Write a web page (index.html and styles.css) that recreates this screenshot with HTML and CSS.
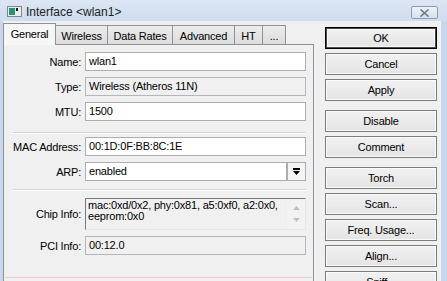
FILE: index.html
```html
<!DOCTYPE html>
<html>
<head>
<meta charset="utf-8">
<link rel="stylesheet" href="styles.css">
</head>
<body>
<div class="window">
  <div class="titlebar">
    <svg class="appicon" width="15" height="11" viewBox="0 0 15 11">
      <rect x="0.5" y="0.5" width="14" height="10" fill="#e8ecef" stroke="#7d8790"/>
      <rect x="2" y="2" width="6" height="7" fill="#2f8f6f"/>
      <rect x="9" y="2" width="2" height="3" fill="#1a1a1a"/>
    </svg>
    <span class="title">Interface &lt;wlan1&gt;</span>
    <div class="close">
      <svg width="11" height="8" viewBox="0 0 11 8">
        <path d="M1.5 0.5 L9.5 7.5 M9.5 0.5 L1.5 7.5" stroke="#6d7886" stroke-width="1.6" fill="none"/>
      </svg>
    </div>
  </div>
  <div class="client">
    <div class="left">
      <div class="tabs">
        <div class="tab selected t-general">General</div>
        <div class="tab t-wireless">Wireless</div>
        <div class="tab t-rates">Data Rates</div>
        <div class="tab t-adv">Advanced</div>
        <div class="tab t-ht">HT</div>
        <div class="tab t-more">...</div>
      </div>
      <div class="pane">
        <div class="section first">
          <div class="row"><label>Name:</label><div class="field">wlan1</div></div>
          <div class="row"><label>Type:</label><div class="field ro">Wireless (Atheros 11N)</div></div>
          <div class="row"><label>MTU:</label><div class="field">1500</div></div>
        </div>
        <div class="sep sep1"></div>
        <div class="section second">
          <div class="row"><label>MAC Address:</label><div class="field">00:1D:0F:BB:8C:1E</div></div>
          <div class="row"><label>ARP:</label>
            <div class="combo">
              <div class="field">enabled</div>
              <div class="dropbtn">
                <svg width="7" height="7" viewBox="0 0 7 7">
                  <rect x="0" y="0" width="7" height="2" fill="#000"/>
                  <path d="M0 3 H7 L3.5 7 Z" fill="#000"/>
                </svg>
              </div>
            </div>
          </div>
        </div>
        <div class="sep sep2"></div>
        <div class="section third">
          <div class="row tall"><label>Chip Info:</label>
            <div class="memo">
              <div class="memo-text">mac:0xd/0x2, phy:0x81, a5:0xf0, a2:0x0,<br>eeprom:0x0</div>
              <div class="scroll">
                <svg width="7" height="4" viewBox="0 0 7 4"><path d="M0 4 L3.5 0 L7 4 Z" fill="#bfbfbf"/></svg>
                <svg width="7" height="4" viewBox="0 0 7 4"><path d="M0 0 L3.5 4 L7 0 Z" fill="#bfbfbf"/></svg>
              </div>
            </div>
          </div>
          <div class="row"><label>PCI Info:</label><div class="field ro">00:12.0</div></div>
        </div>
        <div class="pinkline"></div>
      </div>
    </div>
    <div class="buttons">
      <div class="btn default">OK</div>
      <div class="btn">Cancel</div>
      <div class="btn">Apply</div>
      <div class="btn group">Disable</div>
      <div class="btn">Comment</div>
      <div class="btn group">Torch</div>
      <div class="btn">Scan...</div>
      <div class="btn">Freq. Usage...</div>
      <div class="btn">Align...</div>
      <div class="btn">Sniff...</div>
    </div>
  </div>
</div>
</body>
</html>
```

FILE: styles.css
```css
* { box-sizing: border-box; }
html, body { margin: 0; padding: 0; }
body {
  width: 447px;
  height: 281px;
  overflow: hidden;
  background: #c8d7eb;
  font-family: "Liberation Sans", Arial, sans-serif;
  font-size: 11px;
  letter-spacing: -0.2px;
  color: #000;
}
.window { width: 447px; height: 281px; }
.titlebar {
  height: 21px;
  display: flex;
  align-items: center;
  padding-left: 7px;
  background: linear-gradient(#dce6f3, #cfdcee);
}
.appicon { margin-top: 1px; }
.title {
  margin-left: 4px;
  font-size: 12px;
  letter-spacing: 0;
  color: #222;
  margin-top: 3px;
}
.close {
  margin-left: auto;
  margin-right: 9px;
  margin-top: 4px;
  width: 27px;
  height: 13px;
  border: 1px solid #8d9cb2;
  border-radius: 2px;
  background: linear-gradient(#eef2f8, #d6e0ec);
  display: flex;
  align-items: center;
  justify-content: center;
}
.client {
  margin-left: 3px;
  width: 438px;
  height: 260px;
  background: #f0f0f0;
  padding-top: 2px;
  display: flex;
}
.left { width: 311px; }
.tabs {
  display: flex;
  align-items: flex-end;
  height: 21px;
}
.tab {
  height: 19px;
  border: 1px solid #8e9199;
  border-bottom: none;
  background: linear-gradient(#ececec, #dcdcdc);
  display: flex;
  align-items: center;
  justify-content: center;
  margin-left: -1px;
  padding-top: 1px;
}
.tab.selected {
  height: 22px;
  margin-bottom: -1px;
  margin-left: 0;
  background: #f6f6f6;
  position: relative;
  z-index: 1;
  padding-bottom: 2px;
}
.t-general { width: 53px; }
.t-wireless { width: 53px; }
.t-rates { width: 66px; }
.t-adv { width: 63px; }
.t-ht { width: 29px; }
.t-more { width: 24px; }

.pane {
  border: 1px solid #8e9199;
  background: #f0f0f0;
  height: 240px;
  padding-top: 7px;
}
.row {
  display: grid;
  grid-template-columns: 77px 221px;
  column-gap: 4px;
  align-items: center;
  height: 19px;
  margin-bottom: 6px;
}
.row.tall { height: 32px; }
.row label { text-align: right; white-space: nowrap; }
.field {
  height: 19px;
  border: 1px solid #abadb3;
  background: #fff;
  padding-left: 3px;
  line-height: 17px;
  white-space: nowrap;
  overflow: hidden;
}
.field.ro { background: #f0f0f0; border-color: #b4b6bb; }
.section .row:last-child { margin-bottom: 0; }
.sep {
  margin-left: 9px;
  width: 293px;
  border-top: 1px solid #d5d5d5;
  border-bottom: 1px solid #ffffff;
}
.sep1 { margin-top: 11px; margin-bottom: 3px; }
.sep2 { margin-top: 8px; margin-bottom: 7px; }
.combo { display: flex; height: 19px; }
.combo .field { flex: 1; }
.dropbtn {
  width: 19px;
  height: 19px;
  margin-left: 0;
  border: 1px solid #abadb3;
  background: #f4f4f4;
  display: flex;
  align-items: center;
  justify-content: center;
}
.memo {
  height: 32px;
  display: flex;
  border-top: 1px solid #7a7a7a;
  border-left: 1px solid #7a7a7a;
  border-right: 1px solid #e6e6e6;
  border-bottom: 1px solid #e6e6e6;
  background: #f0f0f0;
}
.memo-text {
  flex: 1;
  padding: 1px 0 0 2px;
  line-height: 11px;
  white-space: nowrap;
  overflow: hidden;
}
.scroll {
  width: 18px;
  display: flex;
  flex-direction: column;
  align-items: center;
  justify-content: space-around;
  padding: 3px 0;
  background: #f2f2f2;
}
.pinkline {
  margin-top: 22px;
  margin-left: 1px;
  width: 307px;
  height: 1px;
  background: #f0caca;
}
.buttons {
  width: 112px;
  margin-left: 11px;
  padding-top: 4px;
  display: flex;
  flex-direction: column;
  gap: 4px;
}
.btn {
  height: 22px;
  flex: none;
  border: 1px solid #7c7c7c;
  box-shadow: inset 0 0 0 1px #fafafa;
  background: linear-gradient(#f1f1f1, #e4e4e4);
  display: flex;
  align-items: center;
  justify-content: center;
}
.btn.default {
  border: 1px solid #000;
  box-shadow: inset 0 0 0 1px #4a4a4a, inset 0 0 0 2px #f8f8f8;
}
.btn.group { margin-top: 5px; }
```
